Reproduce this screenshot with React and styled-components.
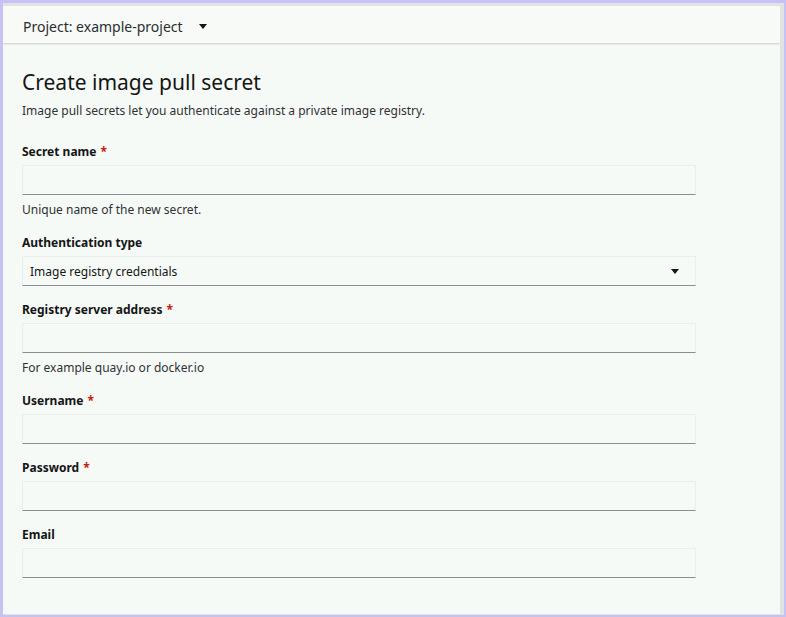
import React from "react";
import styled, { createGlobalStyle } from "styled-components";

const GlobalStyle = createGlobalStyle`
  html, body {
    margin: 0;
    padding: 0;
    background: #c6c2f6;
  }
  body {
    font-family: "Noto Sans", "Liberation Sans", Arial, sans-serif;
    color: #151515;
  }
`;

const Frame = styled.div`
  box-sizing: border-box;
  height: 617px;
  border-style: solid;
  border-color: #c6c2f6;
  border-width: 3px 2px 2px 3px;
`;

const Viewport = styled.div`
  box-sizing: border-box;
  height: 100%;
  background: #f6faf7;
  border-style: solid;
  border-color: #e1e3e1;
  border-width: 3px 4px 1px 0;
  overflow: hidden;
`;

const TopBar = styled.div`
  box-sizing: border-box;
  height: 37px;
  display: flex;
  align-items: center;
  gap: 16px;
  padding: 3px 0 0 20px;
  background: #f8faf8;
  box-shadow: 0 1px 2px rgba(0, 0, 0, 0.18);
  font-size: 14px;
  color: #2b2d2f;
`;

const Caret = styled.span`
  width: 0;
  height: 0;
  border-left: ${(p) => p.size}px solid transparent;
  border-right: ${(p) => p.size}px solid transparent;
  border-top: ${(p) => p.size + 1}px solid #151515;
`;

const Main = styled.main`
  padding: 26px 20px 0 19px;
`;

const Title = styled.h1`
  margin: 0;
  font-size: 21px;
  line-height: 27px;
  font-weight: 400;
  color: #151515;
`;

const Lead = styled.p`
  margin: 6px 0 0;
  font-size: 12px;
  line-height: 18px;
  color: #2f3133;
`;

const Form = styled.form`
  width: 674px;
  margin-top: 23px;
  display: flex;
  flex-direction: column;
  gap: 15px;
`;

const Group = styled.div`
  display: flex;
  flex-direction: column;
`;

const Label = styled.label`
  font-size: 12px;
  line-height: 18px;
  font-weight: 700;
  margin-bottom: 4px;
`;

const Required = styled.span`
  color: #c9190b;
  margin-left: 4px;
`;

const Input = styled.input`
  box-sizing: border-box;
  height: 30px;
  width: 100%;
  margin: 0;
  padding: 0 8px;
  background: #f6faf7;
  border: 1px solid #eceeec;
  border-bottom-color: #8a8d90;
  font: inherit;
  font-size: 12px;
  outline: none;
`;

const Select = styled.div`
  box-sizing: border-box;
  height: 30px;
  display: flex;
  align-items: center;
  justify-content: space-between;
  padding: 0 16px 0 7px;
  background: #f6faf7;
  border: 1px solid #eceeec;
  border-bottom-color: #8a8d90;
  font-size: 12px;
  color: #151515;
`;

const Helper = styled.div`
  margin-top: 6px;
  font-size: 12px;
  line-height: 18px;
  color: #2f3133;
`;

const fields = [
  { label: "Secret name", required: true, helper: "Unique name of the new secret." },
  { label: "Authentication type", select: "Image registry credentials" },
  { label: "Registry server address", required: true, helper: "For example quay.io or docker.io" },
  { label: "Username", required: true },
  { label: "Password", required: true, type: "password" },
  { label: "Email" },
];

export default function App() {
  return (
    <>
      <GlobalStyle />
      <Frame>
        <Viewport>
          <TopBar>
            <span>Project: example-project</span>
            <Caret size={4} />
          </TopBar>
          <Main>
            <Title>Create image pull secret</Title>
            <Lead>Image pull secrets let you authenticate against a private image registry.</Lead>
            <Form onSubmit={(e) => e.preventDefault()}>
              {fields.map((f) => (
                <Group key={f.label}>
                  <Label>
                    {f.label}
                    {f.required && <Required>*</Required>}
                  </Label>
                  {f.select ? (
                    <Select>
                      <span>{f.select}</span>
                      <Caret size={4} />
                    </Select>
                  ) : (
                    <Input type={f.type || "text"} />
                  )}
                  {f.helper && <Helper>{f.helper}</Helper>}
                </Group>
              ))}
            </Form>
          </Main>
        </Viewport>
      </Frame>
    </>
  );
}
